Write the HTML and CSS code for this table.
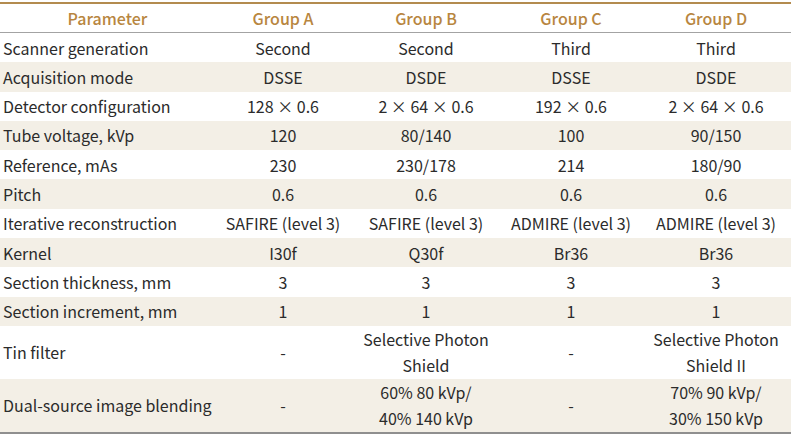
FILE: index.html
```html
<!DOCTYPE html>
<html>
<head>
<meta charset="utf-8">
<link rel="stylesheet" href="styles.css">
</head>
<body>
<table class="data">
  <colgroup>
    <col class="c-param">
    <col class="c-a">
    <col class="c-b">
    <col class="c-c">
    <col class="c-d">
  </colgroup>
  <thead>
    <tr><th>Parameter</th><th>Group A</th><th>Group B</th><th>Group C</th><th>Group D</th></tr>
  </thead>
  <tbody>
    <tr><td>Scanner generation</td><td>Second</td><td>Second</td><td>Third</td><td>Third</td></tr>
    <tr><td>Acquisition mode</td><td>DSSE</td><td>DSDE</td><td>DSSE</td><td>DSDE</td></tr>
    <tr><td>Detector configuration</td><td>128 × 0.6</td><td>2 × 64 × 0.6</td><td>192 × 0.6</td><td>2 × 64 × 0.6</td></tr>
    <tr><td>Tube voltage, kVp</td><td>120</td><td>80/140</td><td>100</td><td>90/150</td></tr>
    <tr><td>Reference, mAs</td><td>230</td><td>230/178</td><td>214</td><td>180/90</td></tr>
    <tr><td>Pitch</td><td>0.6</td><td>0.6</td><td>0.6</td><td>0.6</td></tr>
    <tr><td>Iterative reconstruction</td><td>SAFIRE (level 3)</td><td>SAFIRE (level 3)</td><td>ADMIRE (level 3)</td><td>ADMIRE (level 3)</td></tr>
    <tr><td>Kernel</td><td>I30f</td><td>Q30f</td><td>Br36</td><td>Br36</td></tr>
    <tr><td>Section thickness, mm</td><td>3</td><td>3</td><td>3</td><td>3</td></tr>
    <tr><td>Section increment, mm</td><td>1</td><td>1</td><td>1</td><td>1</td></tr>
    <tr class="tall"><td>Tin filter</td><td>-</td><td>Selective Photon<br>Shield</td><td>-</td><td>Selective Photon<br>Shield II</td></tr>
    <tr class="tall"><td>Dual-source image blending</td><td>-</td><td>60% 80 kVp/<br>40% 140 kVp</td><td>-</td><td>70% 90 kVp/<br>30% 150 kVp</td></tr>
  </tbody>
</table>
</body>
</html>
```
FILE: styles.css
```css
html, body {
  margin: 0;
  padding: 0;
  background: #ffffff;
}
body {
  padding-top: 2px;
  font-family: "Noto Sans CJK KR", "Noto Sans", sans-serif;
  font-size: 16px;
  color: #2b2b2b;
}
.data {
  width: 791px;
  border-collapse: collapse;
  table-layout: fixed;
  border-top: 2px solid #b38b4f;
  border-bottom: 2px solid #8f8f8f;
}
.c-param { width: 215px; }
.c-a { width: 136px; }
.c-b { width: 150px; }
.c-c { width: 140px; }
.c-d { width: 150px; }
.data th {
  color: #b8863f;
  font-weight: 500;
  text-align: center;
  padding: 2px 3px 2px;
  line-height: 24px;
  border-bottom: 1px solid #a3a3a3;
}
.data td {
  text-align: center;
  padding: 2.65px 3px;
  line-height: 24px;
  vertical-align: middle;
  white-space: nowrap;
}
.data td:first-child {
  text-align: left;
}
.data tbody tr:nth-child(even) {
  background: #f3efe6;
}
.data tr.tall td {
  line-height: 26.5px;
  padding: 0 3px;
}
```
